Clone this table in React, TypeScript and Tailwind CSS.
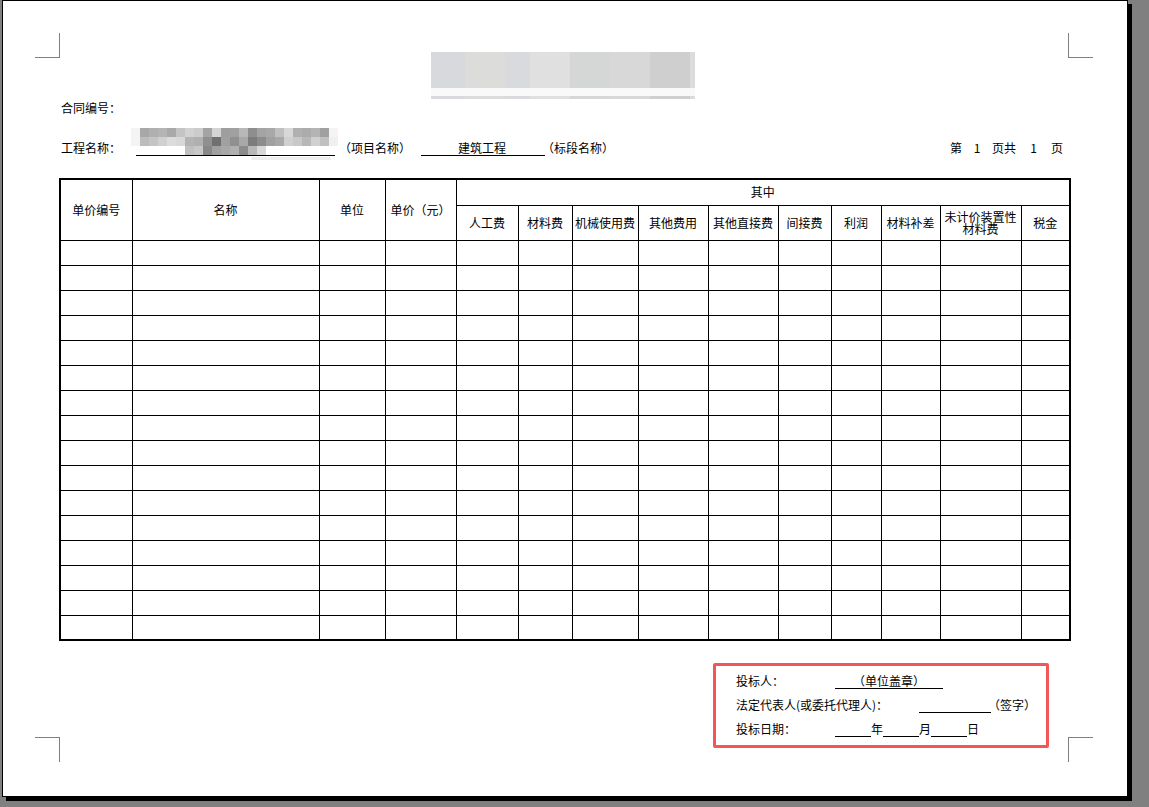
import React from "react";

const font = { fontFamily: '"Noto Sans CJK SC", "Liberation Sans", sans-serif' };

// blurred title block, column colours
const titleCols = [
  { w: 34, c: "#d8d9dc" },
  { w: 40, c: "#dcdcda" },
  { w: 25, c: "#d9dadd" },
  { w: 40, c: "#e0e0e0" },
  { w: 40, c: "#d5d7d6" },
  { w: 40, c: "#d8d8d8" },
  { w: 40, c: "#cfcfcf" },
  { w: 5, c: "#dcdcdc" },
];

// blurred project name mosaic
const nameRows = [
  ["#f4f4f4", "#a8a8a8", "#b0b0b0", "#b4b4b4", "#a9a9a9", "#c4c4c4", "#d2d2d2", "#cccccc", "#a4a4a4", "#d4d4d4", "#9e9e9e", "#a0a0a0", "#b8b8b8", "#8e8e8e", "#a4a4a4", "#a8a8a8", "#c0c0c0", "#d8d8d8", "#b0b0b0", "#acacac", "#b4b4b4", "#a0a0a0", "#f4f4f4"],
  ["#f4f4f4", "#bcbcbc", "#c4c4c4", "#d0d0d0", "#dcdcdc", "#d8d8d8", "#b4b4b4", "#b0b0b0", "#909090", "#707070", "#a0a0a0", "#909090", "#a8a8a8", "#7c7c7c", "#8c8c8c", "#a0a0a0", "#a8a8a8", "#d0d0d0", "#c8c8c8", "#b8b8b8", "#d0d0d0", "#c0c0c0", "#f0f0f0"],
  ["", "", "", "", "", "", "#c0c0c0", "#c8c8c8", "#888888", "#a0a0a0", "#a8a8a8", "#b0b0b0", "#8c8c8c", "#b8b8b8", "#d8d8d8", "", "", "", "", "", "", "", ""],
];

const colWidths = [72, 187, 66, 71, 62, 54, 66, 70, 70, 53, 50, 59, 81, 49];
const subHeads = ["人工费", "材料费", "机械使用费", "其他费用", "其他直接费", "间接费", "利润", "材料补差"];

const cell = "border border-black p-0 text-center align-middle font-normal";

const Corner = ({ className }: { className: string }) => (
  <div className={`absolute w-[25px] h-[25px] border-[#808080] ${className}`}></div>
);

export default function App() {
  return (
    <div className="w-[1149px] h-[807px] bg-[#808080] overflow-hidden text-[12px] text-black" style={font}>
      <div className="relative ml-[2px] w-[1126px] h-[797px] border border-black bg-white shadow-[4px_4px_0_0_#000]">
        {/* crop marks */}
        <Corner className="left-[32px] top-[32px] border-r border-b" />
        <Corner className="left-[1065px] top-[32px] border-l border-b" />
        <Corner className="left-[32px] top-[736px] border-t border-r" />
        <Corner className="left-[1065px] top-[736px] border-t border-l" />

        {/* title (blurred) */}
        <div className="ml-[428px] mt-[51px] w-[264px]">
          <div className="flex h-[36px]">
            {titleCols.map((t, i) => (
              <div key={i} className="h-full" style={{ width: t.w, background: t.c }}></div>
            ))}
          </div>
          <div className="h-[8px] bg-[#f9f9f9]"></div>
          <div className="flex h-[3px]">
            {titleCols.map((t, i) => (
              <div key={i} className="h-full" style={{ width: t.w, background: t.c }}></div>
            ))}
          </div>
        </div>

        <div className="ml-[58px] mt-[1px] leading-[16px]">合同编号：</div>

        {/* project line */}
        <div className="flex items-end h-[29px] mt-[12px] ml-[58px] mr-[64px] leading-[16px]">
          <span className="mb-[1px] w-[70px]">工程名称：</span>
          <div className="relative w-[207px] h-[29px]">
            <div className="absolute left-[5px] top-[27px] w-[199px] h-[1px] bg-black"></div>
            <div className="absolute inset-0 flex flex-col">
              {nameRows.map((r, i) => (
                <div key={i} className="flex h-[9px]">
                  {r.map((c, j) => (
                    <div key={j} className="w-[9px] h-[9px]" style={{ background: c || "transparent" }}></div>
                  ))}
                </div>
              ))}
            </div>
            <div className="absolute left-[120px] top-[29px] w-[80px] h-[3px] rounded-full bg-[#eeeeee]"></div>
          </div>
          <span className="mb-[1px] ml-[1px]">（项目名称）</span>
          <span className="mb-[1px] ml-[10px] w-[124px] pl-[37px] border-b border-black leading-[15px]">建筑工程</span>
          <span className="mb-[1px] -ml-[3px]">（标段名称）</span>
          <span className="mb-[1px] ml-auto flex">
            <span>第</span>
            <span className="inline-block w-[30px] text-center">1</span>
            <span>页共</span>
            <span className="inline-block w-[35px] text-center">1</span>
            <span>页</span>
          </span>
        </div>

        {/* table */}
        <table className="ml-[56px] mt-[21px] w-[1011px] table-fixed border-collapse border-2 border-black leading-[14px]">
          <colgroup>
            {colWidths.map((w, i) => (
              <col key={i} style={{ width: w }} />
            ))}
          </colgroup>
          <thead>
            <tr className="h-[26px]">
              <th rowSpan={2} className={cell}>单价编号</th>
              <th rowSpan={2} className={cell}>名称</th>
              <th rowSpan={2} className={cell}>单位</th>
              <th rowSpan={2} className={cell}>单价（元）</th>
              <th colSpan={10} className={cell}>其中</th>
            </tr>
            <tr className="h-[35px]">
              {subHeads.map((h) => (
                <th key={h} className={cell}>{h}</th>
              ))}
              <th className={`${cell} leading-[12px]`}>
                未计价装置性
                <br />
                材料费
              </th>
              <th className={cell}>税金</th>
            </tr>
          </thead>
          <tbody>
            {Array.from({ length: 16 }).map((_, r) => (
              <tr key={r} className="h-[25px]">
                {colWidths.map((_, c) => (
                  <td key={c} className={cell}></td>
                ))}
              </tr>
            ))}
          </tbody>
        </table>

        {/* signature box */}
        <div className="ml-[710px] mt-[22px] w-[336px] h-[85px] border-[3px] border-[#f25656] rounded-[2px] pl-[20px] pt-[7px] flex flex-col gap-[8px] leading-[16px]">
          <div className="flex">
            <span className="w-[99px]">投标人：</span>
            <span className="w-[108px] text-center border-b border-black leading-[15px]">（单位盖章）</span>
          </div>
          <div className="flex">
            <span className="w-[183px]">法定代表人(或委托代理人)：</span>
            <span className="w-[72px] border-b border-black leading-[15px]"></span>
            <span className="-ml-[3px]">（签字）</span>
          </div>
          <div className="flex">
            <span className="w-[99px]">投标日期：</span>
            <span className="w-[36px] border-b border-black leading-[15px]"></span>
            <span>年</span>
            <span className="w-[36px] border-b border-black leading-[15px]"></span>
            <span>月</span>
            <span className="w-[36px] border-b border-black leading-[15px]"></span>
            <span>日</span>
          </div>
        </div>
      </div>
    </div>
  );
}
